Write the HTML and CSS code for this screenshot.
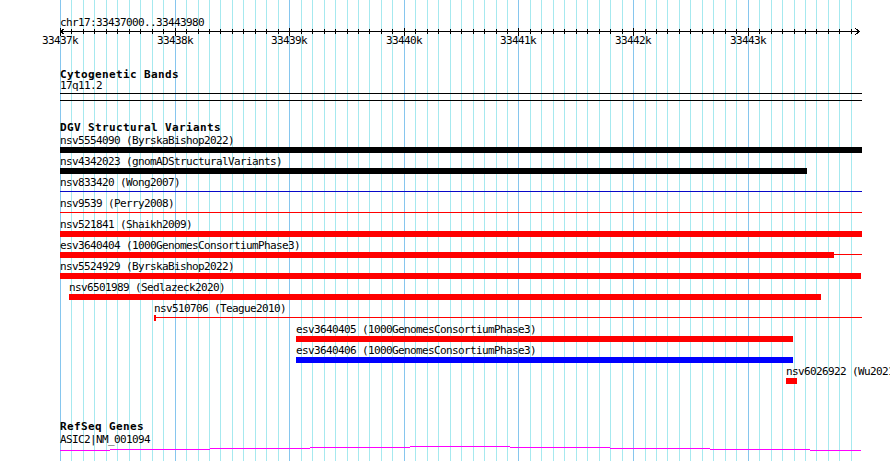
FILE: index.html
```html
<!DOCTYPE html>
<html lang="en">
<head>
    <meta charset="UTF-8">
    <meta name="viewport" content="width=device-width, initial-scale=1.0">
    <title>chr17:33437000..33443980</title>
<link rel="stylesheet" href="styles.css">
<script>
    // view window: 6980 bp drawn on 800 px, starting at x=60
    var viewStart=33437000;
    var viewEnd=33443980;
    var offsetX=60;
    var scale=800/(viewEnd-viewStart);
    var SVGNS="http://www.w3.org/2000/svg";

    function px(bp){
        return Math.round(offsetX+(bp-viewStart)*scale);
    }
    function add(parent,tag,attrs){
        var el=document.createElementNS(SVGNS,tag);
        for(var k in attrs){ el.setAttribute(k,attrs[k]); }
        parent.appendChild(el);
        return el;
    }
    // grid lines every 100 bp, darker every 1 kb
    function drawGrid(){
        var grid=document.getElementById("grid");
        for(var bp=viewStart; bp<viewEnd; bp+=100){
            var major=(bp%1000==0);
            add(grid,"rect",{x:px(bp),y:0,width:1,height:461,"class":major?"grid-major":"grid-minor"});
        }
    }
    // ruler: axis line, arrows, ticks and kb labels
    function drawAxis(){
        var axis=document.getElementById("axis");
        add(axis,"rect",{x:offsetX,y:5,width:800,height:1,"class":"ink"});
        add(axis,"path",{d:"M64.5 2.5L60.5 5.5L64.5 8.5","class":"arrow"});
        add(axis,"path",{d:"M855.5 2.5L859.5 5.5L855.5 8.5","class":"arrow"});
        for(var bp=viewStart; bp<viewEnd; bp+=100){
            var x=px(bp);
            if(bp%1000==0){
                add(axis,"rect",{x:x,y:2,width:1,height:8,"class":"ink"});
                var t=add(axis,"text",{x:x,y:18,"class":"tick-label"});
                t.textContent=(bp/1000)+"k";
            }else{
                add(axis,"rect",{x:x,y:3,width:1,height:5,"class":"ink"});
            }
        }
    }
    window.addEventListener("load",function(){
        drawGrid();
        drawAxis();
    });
</script>
</head>
<body>
    <div class="browser">
        <svg class="grid" id="grid" width="890" height="461"></svg>

        <div class="ruler">
            <div class="ruler-title">chr17:33437000..33443980</div>
            <svg class="axis" id="axis" width="890" height="22"></svg>
        </div>

        <section class="track">
            <h2 class="track-title">Cytogenetic Bands</h2>
            <div class="label band-label">17q11.2</div>
            <div class="band"></div>
        </section>

        <section class="track">
            <h2 class="track-title">DGV Structural Variants</h2>
            <div class="features">
                <div class="feature">
                    <div class="label">nsv5554090 (ByrskaBishop2022)</div>
                    <div class="glyph"><div class="block black" style="width:802px"></div></div>
                </div>
                <div class="feature">
                    <div class="label">nsv4342023 (gnomADStructuralVariants)</div>
                    <div class="glyph"><div class="block black" style="width:747px"></div></div>
                </div>
                <div class="feature">
                    <div class="label">nsv833420 (Wong2007)</div>
                    <div class="glyph"><div class="line blue-line" style="width:802px"></div></div>
                </div>
                <div class="feature">
                    <div class="label">nsv9539 (Perry2008)</div>
                    <div class="glyph"><div class="line red" style="width:802px"></div></div>
                </div>
                <div class="feature">
                    <div class="label">nsv521841 (Shaikh2009)</div>
                    <div class="glyph"><div class="block red" style="width:802px"></div></div>
                </div>
                <div class="feature">
                    <div class="label">esv3640404 (1000GenomesConsortiumPhase3)</div>
                    <div class="glyph">
                        <div class="block red" style="width:774px"></div>
                        <div class="line red" style="width:28px"></div>
                    </div>
                </div>
                <div class="feature">
                    <div class="label">nsv5524929 (ByrskaBishop2022)</div>
                    <div class="glyph"><div class="block red" style="width:801px"></div></div>
                </div>
                <div class="feature" style="margin-left:9px">
                    <div class="label">nsv6501989 (Sedlazeck2020)</div>
                    <div class="glyph"><div class="block red" style="width:752px"></div></div>
                </div>
                <div class="feature" style="margin-left:94px">
                    <div class="label">nsv510706 (Teague2010)</div>
                    <div class="glyph">
                        <div class="cap red"></div>
                        <div class="line red" style="width:706px"></div>
                    </div>
                </div>
                <div class="feature" style="margin-left:236px">
                    <div class="label">esv3640405 (1000GenomesConsortiumPhase3)</div>
                    <div class="glyph"><div class="block red" style="width:497px"></div></div>
                </div>
                <div class="feature" style="margin-left:236px">
                    <div class="label">esv3640406 (1000GenomesConsortiumPhase3)</div>
                    <div class="glyph"><div class="block blue" style="width:497px"></div></div>
                </div>
                <div class="feature" style="margin-left:726px">
                    <div class="label">nsv6026922 (Wu2021)</div>
                    <div class="glyph"><div class="block red" style="width:11px"></div></div>
                </div>
            </div>
        </section>

        <section class="track genes">
            <h2 class="track-title">RefSeq Genes</h2>
            <div class="label gene-label">ASIC2|NM_001094</div>
            <!-- intron connector, runs off both ends of the view -->
            <svg class="intron" width="802" height="5">
                <path d="M0 4.5H50M50 3.5H150M150 2.5H250M250 1.5H350M350 0.5H450M450 1.5H550M550 2.5H650M650 3.5H750M750 4.5H801"/>
            </svg>
        </section>
    </div>
</body>
</html>
```

FILE: styles.css
```css
body{
 margin: 0;
 background-color: #fff;
 overflow: hidden;
}
.browser{
 position: relative;
 z-index: 0;/*grid goes below the tracks*/
 width: 890px;
 height: 461px;
 overflow: hidden;
 background-color: #fff;
 color: #000;
 font-family: "DejaVu Sans Mono", "Liberation Mono", monospace;
 font-size: 11px;
 letter-spacing: -0.62px;/*6px per char*/
}
.grid{
 position: absolute;
 top: 0;
 left: 0;
 z-index: -1;
 shape-rendering: crispEdges;
}
.grid-minor{
 fill: #a6e9ef;
}
.grid-major{
 fill: #86c6ee;
}

/*ruler*/
.ruler{
 padding-top: 16px;
}
.ruler-title{
 margin-left: 60px;
 line-height: 13px;
}
.axis{
 display: block;
 margin-top: -3px;
 shape-rendering: crispEdges;
 overflow: visible;
}
.ink{
 fill: #000;
}
.arrow{
 fill: none;
 stroke: #000;
 stroke-width: 1;
}
.tick-label{
 text-anchor: middle;
 fill: #000;
 font-family: "DejaVu Sans Mono", "Liberation Mono", monospace;
 font-size: 11px;
}

/*tracks*/
.track{
 padding-top: 21px;
 padding-left: 60px;
}
.genes{
 padding-top: 37px;
}
.track-title{
 margin: 0;
 font-size: 11px;
 font-weight: bold;
 letter-spacing: 0.38px;/*7px per char*/
 line-height: 11px;
}
.label{
 line-height: 13px;
 white-space: nowrap;
}
.band-label{
 line-height: 12px;
}
.gene-label{
 line-height: 12px;
 margin-top: 2px;
}
.band{
 width: 802px;
 height: 6px;
 margin-top: 1px;
 border-top: 1px solid #000;
 border-bottom: 1px solid #000;
}
.features{
 display: flex;
 flex-direction: column;
 gap: 2px;
 padding-top: 1px;
}
.glyph{
 display: flex;
 height: 6px;
}
.block{
 height: 6px;
}
.line{
 height: 1px;
 margin-top: 2px;
}
.cap{
 width: 2px;
 height: 6px;
}
.black{
 background-color: #000;
}
.red{
 background-color: #ff0000;
}
.blue{
 background-color: #0000ff;
}
.blue-line{
 background-color: #0808c8;
}
.intron{
 display: block;
 shape-rendering: crispEdges;
}
.intron path{
 fill: none;
 stroke: #ff00ff;
 stroke-width: 1;
}
```
